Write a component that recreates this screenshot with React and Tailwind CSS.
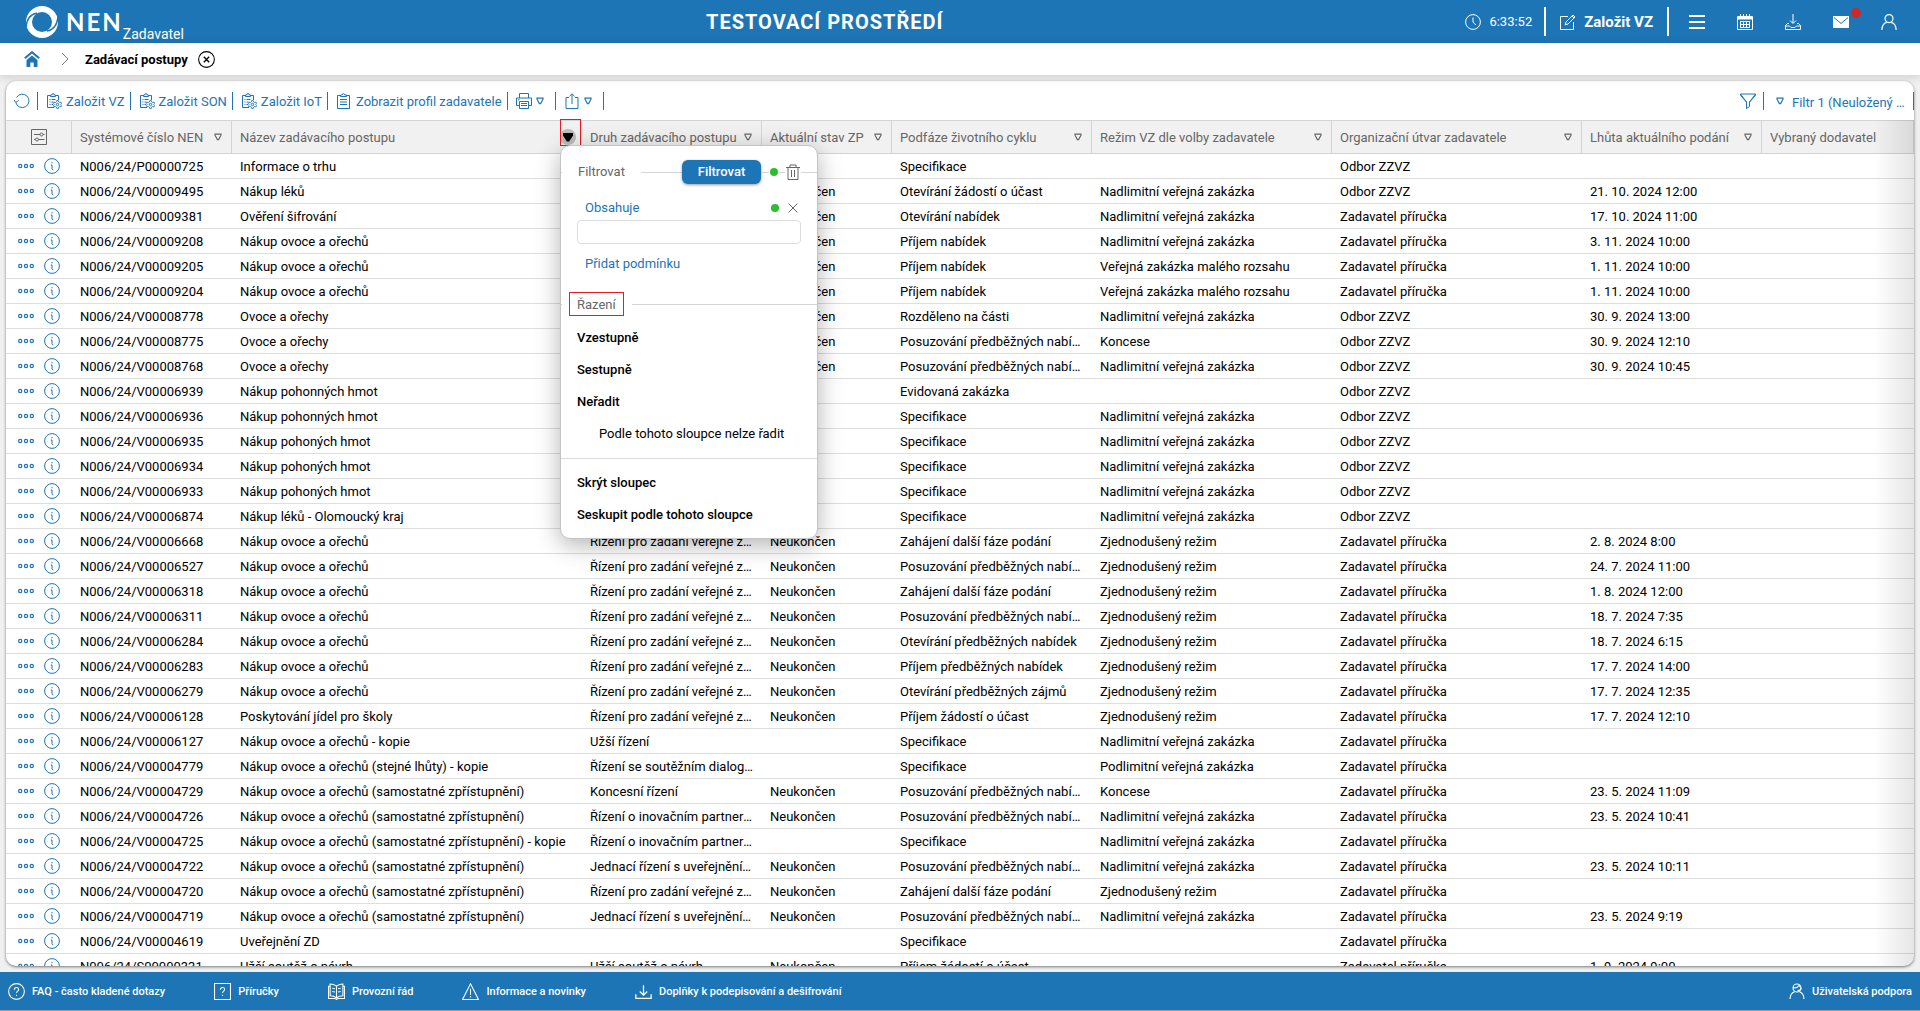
// App.jsx
const K = "Nadlimitní veřejná zakázka";
const Z = "Zjednodušený režim";
const MALY = "Veřejná zakázka malého rozsahu";
const ODBOR = "Odbor ZZVZ";
const ZP = "Zadavatel příručka";
const NEUK = "Neukončen";
const RIZENI = "Řízení pro zadání veřejné zakázky";
const POSUZ = "Posuzování předběžných nabídek";
const JRSU = "Jednací řízení s uveřejněním zakázky";
const SAM = "Nákup ovoce a ořechů (samostatné zpřístupnění)";

// cislo, nazev, druh, stav, podfaze, rezim, utvar, lhuta
const rows = [
  ["N006/24/P00000725", "Informace o trhu", "", "", "Specifikace", "", ODBOR, ""],
  ["N006/24/V00009495", "Nákup léků", "", NEUK, "Otevírání žádostí o účast", K, ODBOR, "21. 10. 2024 12:00"],
  ["N006/24/V00009381", "Ověření šifrování", "", NEUK, "Otevírání nabídek", K, ZP, "17. 10. 2024 11:00"],
  ["N006/24/V00009208", "Nákup ovoce a ořechů", "", NEUK, "Příjem nabídek", K, ZP, "3. 11. 2024 10:00"],
  ["N006/24/V00009205", "Nákup ovoce a ořechů", "", NEUK, "Příjem nabídek", MALY, ZP, "1. 11. 2024 10:00"],
  ["N006/24/V00009204", "Nákup ovoce a ořechů", "", NEUK, "Příjem nabídek", MALY, ZP, "1. 11. 2024 10:00"],
  ["N006/24/V00008778", "Ovoce a ořechy", "", NEUK, "Rozděleno na části", K, ODBOR, "30. 9. 2024 13:00"],
  ["N006/24/V00008775", "Ovoce a ořechy", "", NEUK, POSUZ, "Koncese", ODBOR, "30. 9. 2024 12:10"],
  ["N006/24/V00008768", "Ovoce a ořechy", "", NEUK, POSUZ, K, ODBOR, "30. 9. 2024 10:45"],
  ["N006/24/V00006939", "Nákup pohonných hmot", "", "", "Evidovaná zakázka", "", ODBOR, ""],
  ["N006/24/V00006936", "Nákup pohonných hmot", "", "", "Specifikace", K, ODBOR, ""],
  ["N006/24/V00006935", "Nákup pohoných hmot", "", "", "Specifikace", K, ODBOR, ""],
  ["N006/24/V00006934", "Nákup pohoných hmot", "", "", "Specifikace", K, ODBOR, ""],
  ["N006/24/V00006933", "Nákup pohoných hmot", "", "", "Specifikace", K, ODBOR, ""],
  ["N006/24/V00006874", "Nákup léků - Olomoucký kraj", "", "", "Specifikace", K, ODBOR, ""],
  ["N006/24/V00006668", "Nákup ovoce a ořechů", RIZENI, NEUK, "Zahájení další fáze podání", Z, ZP, "2. 8. 2024 8:00"],
  ["N006/24/V00006527", "Nákup ovoce a ořechů", RIZENI, NEUK, POSUZ, Z, ZP, "24. 7. 2024 11:00"],
  ["N006/24/V00006318", "Nákup ovoce a ořechů", RIZENI, NEUK, "Zahájení další fáze podání", Z, ZP, "1. 8. 2024 12:00"],
  ["N006/24/V00006311", "Nákup ovoce a ořechů", RIZENI, NEUK, POSUZ, Z, ZP, "18. 7. 2024 7:35"],
  ["N006/24/V00006284", "Nákup ovoce a ořechů", RIZENI, NEUK, "Otevírání předběžných nabídek", Z, ZP, "18. 7. 2024 6:15"],
  ["N006/24/V00006283", "Nákup ovoce a ořechů", RIZENI, NEUK, "Příjem předběžných nabídek", Z, ZP, "17. 7. 2024 14:00"],
  ["N006/24/V00006279", "Nákup ovoce a ořechů", RIZENI, NEUK, "Otevírání předběžných zájmů", Z, ZP, "17. 7. 2024 12:35"],
  ["N006/24/V00006128", "Poskytování jídel pro školy", RIZENI, NEUK, "Příjem žádostí o účast", Z, ZP, "17. 7. 2024 12:10"],
  ["N006/24/V00006127", "Nákup ovoce a ořechů - kopie", "Užší řízení", "", "Specifikace", K, ZP, ""],
  ["N006/24/V00004779", "Nákup ovoce a ořechů (stejné lhůty) - kopie", "Řízení se soutěžním dialogem", "", "Specifikace", "Podlimitní veřejná zakázka", ZP, ""],
  ["N006/24/V00004729", SAM, "Koncesní řízení", NEUK, POSUZ, "Koncese", ZP, "23. 5. 2024 11:09"],
  ["N006/24/V00004726", SAM, "Řízení o inovačním partnerství", NEUK, POSUZ, K, ZP, "23. 5. 2024 10:41"],
  ["N006/24/V00004725", SAM + " - kopie", "Řízení o inovačním partnerství", "", "Specifikace", K, ZP, ""],
  ["N006/24/V00004722", SAM, JRSU, NEUK, POSUZ, K, ZP, "23. 5. 2024 10:11"],
  ["N006/24/V00004720", SAM, RIZENI, NEUK, "Zahájení další fáze podání", Z, ZP, ""],
  ["N006/24/V00004719", SAM, JRSU, NEUK, POSUZ, K, ZP, "23. 5. 2024 9:19"],
  ["N006/24/V00004619", "Uveřejnění ZD", "", "", "Specifikace", "", ZP, ""],
  ["N006/24/S00000331", "Užší soutěž o návrh", "Užší soutěž o návrh", NEUK, "Příjem žádostí o účast", "", ZP, "1. 9. 2024 9:00"],
];

const Icon = ({ children, className = "size-4", sw = 1 }) => (
  <svg
    viewBox="0 0 16 16"
    className={`shrink-0 ${className}`}
    fill="none"
    stroke="currentColor"
    strokeWidth={sw}
    aria-hidden="true"
  >
    {children}
  </svg>
);

const Triangle = () => (
  <svg viewBox="0 0 8 8" className="size-2 shrink-0" fill="none" stroke="currentColor" strokeWidth="1.2" aria-hidden="true">
    <path d="M1 1.2h6v1L4.6 6.6H3.4L1 2.2z" />
  </svg>
);

const Logo = () => (
  <svg viewBox="0 0 32 32" className="size-8" aria-hidden="true">
    <circle cx="16" cy="16" r="16" fill="#fff" />
    <circle cx="16" cy="16" r="10" fill="#1d75b5" />
    <path d="M0 21C1 12 5 8 11 7M32 11c-1 9-5 13-11 14" fill="none" stroke="#1d75b5" strokeWidth="1.5" />
  </svg>
);

const ClipboardGear = () => (
  <Icon>
    <path d="M8 14.5H1.5v-12h3M9.500 2.500h3V7M4.500 3.500V2h1.200a1.300 1.300 0 0 1 2.600 0h1.200v1.500zM3.500 6.500h1M5.500 6.500h4M3.500 9h1M5.500 9h2M3.500 11.500h1M5.500 11.500H7" />
    <circle cx="11.5" cy="11.5" r="1.2" />
    <path
      d="M10.700 7.600h1.600l.3 1.300 1.100.6 1.300-.4.700 1.400-.9 1 .9 1-.7 1.400-1.300-.4-1.100.6-.3 1.300h-1.600l-.3-1.300-1.100-.6-1.300.4-.7-1.400.9-1-.9-1 .7-1.400 1.300.4 1.100-.6z"
      strokeWidth="0.9"
    />
  </Icon>
);

const Clipboard = () => (
  <Icon>
    <path d="M4.500 2.500h-3v13h12v-13h-3M4.500 3.500V2h1.700a1.300 1.300 0 0 1 2.600 0h1.700v1.500zM4 6.500h7M4 9h7M4 11.500h7" />
  </Icon>
);

const Sep = () => <span className="h-[18px] w-px shrink-0 bg-[#1d75b5]" />;

const actions = [
  { label: "Založit VZ", icon: <ClipboardGear /> },
  { label: "Založit SON", icon: <ClipboardGear /> },
  { label: "Založit IoT", icon: <ClipboardGear /> },
  { label: "Zobrazit profil zadavatele", icon: <Clipboard /> },
];

const headers = [
  "Systémové číslo NEN",
  "Název zadávacího postupu",
  "Druh zadávacího postupu",
  "Aktuální stav ZP",
  "Podfáze životního cyklu",
  "Režim VZ dle volby zadavatele",
  "Organizační útvar zadavatele",
  "Lhůta aktuálního podání",
  "Vybraný dodavatel",
];

const Header = () => (
  <header className="flex h-[43px] shrink-0 items-center justify-between bg-[#1d75b5] pr-[7px] pl-[26px] text-white">
    <a href="#" className="flex items-center">
      <Logo />
      <span className="ml-2 font-['Lato'] text-2xl leading-6 font-bold tracking-[2px]">NEN</span>
      <span className="mt-6 text-sm leading-4">Zadavatel</span>
    </a>
    <h1 className="text-xl leading-6 font-bold tracking-wider whitespace-nowrap">TESTOVACÍ PROSTŘEDÍ</h1>
    <div className="flex items-center">
      <Icon>
        <circle cx="8" cy="8" r="7.400" />
        <path d="M8 3.500V8l2.800 3" />
      </Icon>
      <span className="ml-2 text-[13px]">6:33:52</span>
      <span className="ml-3 h-[29px] w-0.5 bg-white" />
      <button type="button" className="mx-3.5 flex items-center gap-2 text-[15px] leading-6 font-bold">
        <Icon>
          <path d="M8 2.500H.5v13h13V8M6 8l7-7 2 2-7 7-2.800.8z" />
          <path d="m12 2 2 2" />
        </Icon>
        Založit VZ
      </button>
      <span className="mr-1 h-[29px] w-0.5 bg-white" />
      <button type="button" aria-label="Menu" className="flex w-12 justify-center">
        <Icon sw={2}>
          <path d="M0 2h16M0 8h16M0 14h16" />
        </Icon>
      </button>
      <button type="button" aria-label="Kalendář" className="flex w-12 justify-center">
        <Icon>
          <path d="M.5 2.500h15v13H.5zM3.500 0v3M12.500 0v3M6.500 0v3M9.500 0v3" />
          <path d="M1 3h14v2H1z" fill="currentColor" />
          <path d="M3 7.500h10M3 10.500h10M3 13.500h10M3.500 7v7M6.500 7v7M9.500 7v7M12.500 7v7" />
        </Icon>
      </button>
      <button type="button" aria-label="Stažené soubory" className="flex w-12 justify-center">
        <Icon>
          <path d="M8 0v9M5 6.500l3 3 3-3M4 9.500H2.500l-2 2v4h15v-4l-2-2H12M.5 12h4L6 13.500h4l1.500-1.500h4" />
        </Icon>
      </button>
      <button type="button" aria-label="Zprávy" className="relative flex w-12 justify-center">
        <Icon>
          <path d="M0 2h16v12H0z" fill="currentColor" stroke="none" />
          <path d="m1 3.500 7 6 7-6" stroke="#1d75b5" />
        </Icon>
        <span className="absolute -top-1.5 left-[34px] size-2.5 rounded-full bg-[#cc2a2a]" />
      </button>
      <button type="button" aria-label="Uživatel" className="flex w-12 justify-center">
        <Icon sw={1.2}>
          <circle cx="8" cy="4.600" r="4" />
          <path d="M.8 16c.2-4.500 2.200-7 5-7.700M15.200 16c-.2-4.500-2.200-7-5-7.700" />
        </Icon>
      </button>
    </div>
  </header>
);

const Breadcrumb = () => (
  <nav className="z-10 flex h-8 shrink-0 items-center bg-white pl-6 shadow-[0_2px_10px_rgba(0,0,0,0.15)]">
    <a href="#" aria-label="Domů" className="text-[#1d75b5]">
      <Icon>
        <path d="M2.500 9 8 4.500 13.500 9v7h-3.800v-4.500H6.300V16H2.500z" fill="currentColor" stroke="none" />
        <path d="M.8 7.200 8 1.200l7.200 6" strokeWidth="2" />
      </Icon>
    </a>
    <Icon className="mr-3 ml-[17px] size-4 text-[#777]">
      <path d="m5 2 6 6-6 6" />
    </Icon>
    <a href="#" className="pt-px text-[13px] font-bold text-black">
      Zadávací postupy
    </a>
    <button type="button" aria-label="Zavřít" className="ml-2.5">
      <Icon className="size-[17px]">
        <circle cx="8" cy="8" r="7.400" />
        <path d="m5.500 5.500 5 5M10.500 5.500l-5 5" strokeWidth="1.300" />
      </Icon>
    </button>
  </nav>
);

const Toolbar = () => (
  <div className="flex h-[39px] shrink-0 items-center text-[13px] text-[#1d75b5]">
    <button type="button" aria-label="Obnovit" className="mr-[7px] ml-2">
      <Icon>
        <path d="M1.800 9.500A6.700 6.700 0 1 0 2.500 4.500M0 7l1.800 2.500L4.500 7.500" />
      </Icon>
    </button>
    <Sep />
    {actions.map((a) => (
      <div key={a.label} className="flex items-center">
        <button type="button" className="flex items-center gap-1 pr-[5px] pl-2 whitespace-nowrap">
          {a.icon}
          <span className="pt-0.5">{a.label}</span>
        </button>
        <Sep />
      </div>
    ))}
    <button type="button" aria-label="Tisk" className="flex items-center gap-1 pr-[11px] pl-2">
      <Icon>
        <path d="M3.500 5V.5h9V5M3.500 12.500h-3V5h15v7.500h-3M3.500 8.500h9v7h-9zM5 10.500h6M5 12.500h6M2 6.800h1.500" />
      </Icon>
      <Triangle />
    </button>
    <Sep />
    <button type="button" aria-label="Export" className="flex items-center gap-1 pr-[11px] pl-2">
      <Icon>
        <path d="M5 4.500H2v11h12v-11h-3M8 11V1M5.500 3.200 8 .8l2.500 2.400" />
      </Icon>
      <Triangle />
    </button>
    <Sep />
    <button type="button" aria-label="Filtr" className="mr-[7px] ml-auto">
      <Icon>
        <path d="M.5 1h15L9.500 9v4.500l-3 2V9zM.5 1v1.500l6 6.500M15.500 1v1.500l-6 6.500" />
      </Icon>
    </button>
    <Sep />
    <button type="button" className="mr-1 ml-3 flex w-[133px] items-center gap-2">
      <Triangle />
      <span className="truncate pt-1">Filtr 1 (Neuložený filtr)</span>
    </button>
    <Sep />
  </div>
);

const Dot = () => <span className="mx-px size-2 shrink-0 rounded-full bg-[#2fbd2f]" />;

const Line = ({ className }) => <span className={`h-px bg-[#d4d4d4] ${className}`} />;

const itemClass = "block h-8 w-full px-4 text-left";

const FilterMenu = () => (
  <div className="absolute top-6 left-[328px] w-[258px] rounded-[10px] border border-[#c4c4c4] bg-white pb-[7px] text-[13px] text-black shadow-[0_6px_24px_rgba(0,0,0,0.3)]">
    <div className="mt-3.5 flex h-6 items-center text-[#666]">
      <Line className="mr-4 w-px" />
      <span>Filtrovat</span>
      <Line className="ml-4 flex-1" />
      <button type="button" className="h-6 w-[79px] rounded-md bg-[#1d75b5] font-medium text-white shadow-[0_1px_3px_rgba(0,0,0,0.4)]">
        Filtrovat
      </button>
      <Line className="w-2" />
      <Dot />
      <Line className="w-1.5" />
      <button type="button" aria-label="Smazat filtr">
        <Icon>
          <path d="M1 3.500h14M3 3.500v12h10v-12M5 3.500V1h6v2.500M6.500 6v7M9.500 6v7" />
        </Icon>
      </button>
      <Line className="w-4" />
    </div>
    <div className="mt-3 flex h-6 items-center pr-[19px] pl-6">
      <label htmlFor="obsahuje" className="flex-1 text-[#1d75b5]">
        Obsahuje
      </label>
      <Dot />
      <button type="button" aria-label="Odebrat podmínku" className="ml-2 text-[#666]">
        <Icon className="size-2.5" sw={1.6}>
          <path d="m1 1 14 14M15 1 1 15" />
        </Icon>
      </button>
    </div>
    <div className="px-4">
      <input id="obsahuje" type="text" className="block h-6 w-full rounded border border-[#dcdcdc] px-2 outline-none" />
    </div>
    <button type="button" className="mt-2 ml-6 block h-6 text-[#1d75b5]">
      Přidat podmínku
    </button>
    <div className="mt-4 flex h-6 items-center text-[#666]">
      <Line className="w-px" />
      <span className="ml-[7px] h-6 border border-[#e31e24] px-[7px] leading-6">Řazení</span>
      <Line className="ml-2 flex-1" />
    </div>
    <ul className="mt-1.5 font-medium">
      <li>
        <button type="button" className={itemClass}>Vzestupně</button>
      </li>
      <li>
        <button type="button" className={itemClass}>Sestupně</button>
      </li>
      <li>
        <button type="button" className={itemClass}>Neřadit</button>
      </li>
      <li className="h-8 pl-[38px] leading-8 font-normal">Podle tohoto sloupce nelze řadit</li>
    </ul>
    <ul className="mt-2 border-t border-[#dcdcdc] pt-2 font-medium">
      <li>
        <button type="button" className={itemClass}>Skrýt sloupec</button>
      </li>
      <li>
        <button type="button" className={itemClass}>Seskupit podle tohoto sloupce</button>
      </li>
    </ul>
  </div>
);

const HeadCell = ({ label, last, open }) => (
  <th className="relative h-[34px] border-y border-r border-[#d4d4d4] bg-[#f1f1f1] p-0 font-normal">
    <div className="flex items-center justify-between pr-[5px] pl-2">
      <span className="pt-0.5 whitespace-nowrap">{label}</span>
      {!last && (
        <button
          type="button"
          aria-label={`Filtr: ${label}`}
          aria-expanded={!!open}
          className={open ? "flex size-4 items-center justify-center rounded-full bg-[#bcbcbc] text-black" : "flex size-4 items-center justify-center"}
        >
          {open ? (
            <svg viewBox="0 0 10 10" className="size-2.5" fill="currentColor" aria-hidden="true">
              <path d="M0 1h10v2.500L6.200 9.500H3.800L0 3.500z" />
            </svg>
          ) : (
            <Triangle />
          )}
        </button>
      )}
    </div>
    {open && (
      <div className="absolute inset-0 z-10">
        <span className="pointer-events-none absolute -top-[2px] right-0 h-[27px] w-[21px] border border-[#e31e24]" />
        <FilterMenu />
      </div>
    )}
  </th>
);

const Grid = () => (
  <div className="relative min-h-0 flex-1">
    <table className="w-full table-fixed border-separate border-spacing-0 text-left text-[13px] leading-4">
      <colgroup>
        <col className="w-[66px]" />
        <col className="w-[160px]" />
        <col className="w-[350px]" />
        <col className="w-[180px]" />
        <col className="w-[130px]" />
        <col className="w-[200px]" />
        <col className="w-[240px]" />
        <col className="w-[250px]" />
        <col className="w-[180px]" />
        <col />
      </colgroup>
      <thead className="text-[#666]">
        <tr>
          <th className="border-y border-r border-[#d4d4d4] bg-[#f1f1f1] p-0">
            <button type="button" aria-label="Nastavení sloupců" className="mx-auto block">
              <Icon>
                <path d="M.5.5h15v15H.5zM3 5.500h6M12 5.500h1.500M3 10.500h1.500M7.500 10.500h6" />
                <circle cx="10.500" cy="5.500" r="1.500" />
                <circle cx="6" cy="10.500" r="1.500" />
              </Icon>
            </button>
          </th>
          {headers.map((h, i) => (
            <HeadCell key={h} label={h} open={i === 1} last={i === headers.length - 1} />
          ))}
        </tr>
      </thead>
      <tbody className="text-black">
        {rows.map((r) => (
          <tr key={r[0]}>
            <td className="h-[25px] border-b border-[#dedede] p-0">
              <div className="flex items-center gap-2.5 pl-3 text-[#1d75b5]">
                <button type="button" aria-label="Akce">
                  <Icon sw={1.2}>
                    <circle cx="2.200" cy="8" r="1.600" />
                    <circle cx="8" cy="8" r="1.600" />
                    <circle cx="13.800" cy="8" r="1.600" />
                  </Icon>
                </button>
                <button type="button" aria-label="Detail">
                  <Icon>
                    <circle cx="8" cy="8" r="7.400" />
                    <path d="M8 4v1.300M6.800 7H8v3.800q0 1 1.300 1" />
                  </Icon>
                </button>
              </div>
            </td>
            {r.map((cell, i) => (
              <td key={i} className="truncate border-b border-[#dedede] px-2 pt-0.5 pb-0">
                {cell}
              </td>
            ))}
            <td className="border-b border-[#dedede] p-0" />
          </tr>
        ))}
      </tbody>
    </table>
    <div className="pointer-events-none absolute inset-y-0 right-0 w-10 bg-linear-to-r from-transparent to-black/10" />
  </div>
);

const footerLinks = [
  {
    label: "FAQ - často kladené dotazy",
    icon: (
      <Icon className="size-[17px]">
        <circle cx="8" cy="8" r="7.400" />
        <path d="M6 6.300C6 3.500 10 3.500 10 6c0 1.600-2 1.600-2 3.500M8 11v1.200" />
      </Icon>
    ),
  },
  {
    label: "Příručky",
    icon: (
      <Icon className="size-[17px]">
        <path d="M.5.5h15v15H.5zM6 6.300C6 3.500 10 3.500 10 6c0 1.600-2 1.600-2 3.500M8 11v1.200" />
      </Icon>
    ),
  },
  {
    label: "Provozní řád",
    icon: (
      <Icon className="size-[17px]">
        <path d="M8 3C6 1.500 3.500 1 2 1v11c2 0 4 .3 6 2 2-1.700 4-2 6-2V1c-1.500 0-4 .5-6 2zM8 3v11M2 3H.5v11.500h6L8 15.500l1.500-1h6V3H14M4 5l2.500.5M4 8l2.500.5M12 5l-2.500.5M12 8l-2.500.5" />
      </Icon>
    ),
  },
  {
    label: "Informace a novinky",
    icon: (
      <Icon className="size-[17px]">
        <path d="m8 .8 7.500 14.700H.5zM8 5.500V11M8 12.300v1.400" />
      </Icon>
    ),
  },
  {
    label: "Doplňky k podepisování a dešifrování",
    icon: (
      <Icon className="size-[17px]" sw={1.2}>
        <path d="M8 2v9M4.500 8 8 11.500 11.500 8M.8 10.500v4h14.400v-4" />
      </Icon>
    ),
  },
];

const Footer = () => (
  <footer className="mt-1.5 flex h-[39px] shrink-0 items-center justify-between border-b border-[#9a9a9a] bg-[#1d75b5] px-2 text-[11px] font-medium text-white">
    <div className="flex gap-[49px]">
      {footerLinks.map((l) => (
        <a key={l.label} href="#" className="flex items-center gap-[7px] whitespace-nowrap">
          {l.icon}
          <span className="pt-0.5">{l.label}</span>
        </a>
      ))}
    </div>
    <a href="#" className="flex items-center gap-[7px]">
      <Icon sw={1.1}>
        <circle cx="8" cy="5" r="4" />
        <path d="M4 4.500c3 1 5-.5 6-2 .5 1 1 1.500 2 1.500M12 5c0 2-1.500 2.500-3.500 2.500M1 16c.2-4 2-6.500 4.500-7.300M15 16c-.2-4-2-6.500-4.500-7.300" />
      </Icon>
      <span className="pt-0.5">Uživatelská podpora</span>
    </a>
  </footer>
);

const App = () => {
  return (
    <div className="flex h-screen flex-col overflow-hidden bg-[#f0f0f0] font-['Roboto',sans-serif]">
      <Header />
      <Breadcrumb />
      <main className="mx-1.5 mt-1.5 flex min-h-0 flex-1 flex-col overflow-hidden rounded-[10px] bg-white shadow-[0_1px_3px_rgba(0,0,0,0.5)]">
        <Toolbar />
        <Grid />
      </main>
      <Footer />
    </div>
  );
};

export default App;
